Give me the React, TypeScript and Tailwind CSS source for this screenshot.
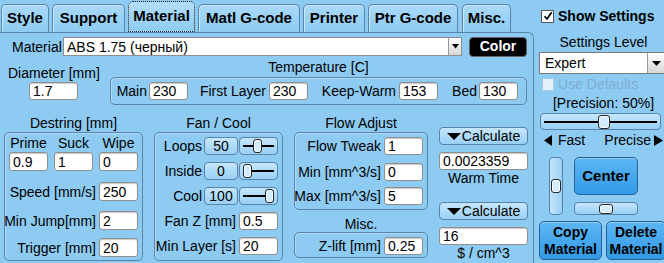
import React from "react";

function Inp({ v, c }: { v: string; c: string }) {
  return (
    <div
      className={`bg-white border border-[#8f8f8f] rounded-[3px] shadow-[inset_0_1px_1px_rgba(0,0,0,0.22)] flex items-center pl-[3px] leading-none overflow-hidden whitespace-nowrap shrink-0 ${c}`}
    >
      {v}
    </div>
  );
}

function Lbl({ t, c }: { t: string; c: string }) {
  return (
    <div className={`flex justify-end whitespace-nowrap leading-[16px] shrink-0 ${c}`}>
      <span>{t}</span>
    </div>
  );
}

function Thumb({ c }: { c: string }) {
  return (
    <div
      className={`rounded-[3px] border border-[#262626] bg-[#d3ecfc] shadow-[inset_0_0_0_1px_#f6fcff] shrink-0 ${c}`}
    />
  );
}

function LineSlider({ pos, c, tc }: { pos: string; c: string; tc: string }) {
  return (
    <div
      className={`rounded-[4px] border border-[#5a83a8] bg-[linear-gradient(#c6e6fb,#98d0f5)] flex items-center px-[3px] shrink-0 ${c}`}
    >
      <div className={`h-[2px] bg-black shrink-0 ${pos}`} />
      <Thumb c={tc} />
      <div className="h-[2px] bg-black flex-1" />
    </div>
  );
}

function LightBtn({ t, c }: { t: string; c: string }) {
  return (
    <div
      className={`rounded-[4px] border border-[#5a83a8] bg-[linear-gradient(#c6e6fb,#98d0f5)] flex items-center justify-center leading-none shrink-0 ${c}`}
    >
      {t}
    </div>
  );
}

function CalcBtn({ c }: { c: string }) {
  return (
    <div
      className={`h-[18px] w-[89px] rounded-[4px] border border-[#5a83a8] bg-[linear-gradient(#c6e6fb,#98d0f5)] flex items-center justify-center gap-[1px] leading-none ${c}`}
    >
      <svg width="14" height="7" viewBox="0 0 14 7">
        <path d="M0 0H14L7 7Z" fill="#000" />
      </svg>
      <span>Calculate</span>
    </div>
  );
}

function Tab({ t, c, active }: { t: string; c: string; active?: boolean }) {
  return (
    <div
      className={
        active
          ? `h-[31px] rounded-t-[5px] border border-dotted border-[#222] bg-[linear-gradient(#b4def9,#8ecbf3)] flex items-center justify-center font-bold text-[15px] whitespace-nowrap shrink-0 ${c}`
          : `h-[28px] rounded-t-[5px] border border-b-0 border-[#5a83a8] bg-[linear-gradient(#a9d9f8,#8ecbf3)] shadow-[inset_1px_1px_0_#c9e9fc] flex items-center justify-center font-bold text-[15px] whitespace-nowrap shrink-0 ${c}`
      }
    >
      {t}
    </div>
  );
}

const groupBox =
  "rounded-[5px] border border-[#5a83a8] shadow-[inset_1px_1px_0_rgba(255,255,255,0.3)]";

export default function App() {
  return (
    <div className="w-[664px] h-[263px] overflow-hidden bg-[#8ecbf3] flex font-['Liberation_Sans',Arial,sans-serif] text-[14px] text-black">
      {/* LEFT */}
      <div className="w-[534px] shrink-0 flex flex-col">
        <div className="h-[32px] flex items-end pl-[1px] gap-[3px] shrink-0">
          <Tab t="Style" c="w-[48px]" />
          <Tab t="Support" c="w-[73px]" />
          <Tab t="Material" c="w-[67px]" active />
          <Tab t="Matl G-code" c="w-[102px]" />
          <Tab t="Printer" c="w-[62px]" />
          <Tab t="Ptr G-code" c="w-[90px]" />
          <Tab t="Misc." c="w-[49px] ml-[1px]" />
        </div>

        <div className="flex-1 border-t border-r border-[#5a83a8] rounded-tr-[6px] flex flex-col">
          {/* Material row */}
          <div className="mt-[4px] flex items-center h-[19px]">
            <div className="w-[63px] pl-[12px] leading-[16px] shrink-0">Material</div>
            <div className="w-[399px] h-[19px] bg-white border border-[#8f8f8f] flex items-center shrink-0">
              <span className="flex-1 pl-[3px] leading-none whitespace-nowrap">ABS 1.75 (черный)</span>
              <div className="w-[13px] h-full border-l border-[#9a9a9a] bg-[linear-gradient(#ffffff,#d6d6d6)] flex items-center justify-center">
                <svg width="7" height="5" viewBox="0 0 7 5">
                  <path d="M0 0H7L3.5 4.5Z" fill="#000" />
                </svg>
              </div>
            </div>
            <div className="ml-[7px] w-[58px] h-[20px] rounded-[4px] bg-black border border-[#666] text-white font-bold text-[14px] flex items-center justify-center shrink-0">
              Color
            </div>
          </div>

          {/* Diameter + temperature */}
          <div className="mt-[3px] flex">
            <div className="w-[110px] pl-[8px] pt-[6px] flex flex-col shrink-0">
              <div className="leading-[16px] whitespace-nowrap">Diameter [mm]</div>
              <Inp v="1.7" c="ml-[21px] mt-[1px] w-[49px] h-[18px]" />
            </div>
            <div className="w-[417px] flex flex-col shrink-0">
              <div className="leading-[16px] text-center">Temperature [C]</div>
              <div className={`mt-[2px] h-[28px] flex items-center ${groupBox}`}>
                <div className="w-[77px] flex items-center shrink-0">
                  <Lbl t="Main" c="flex-1 pr-[2px]" />
                  <Inp v="230" c="w-[39px] h-[18px]" />
                </div>
                <div className="w-[120px] flex items-center shrink-0">
                  <Lbl t="First Layer" c="flex-1 pr-[3px]" />
                  <Inp v="230" c="w-[39px] h-[18px]" />
                </div>
                <div className="w-[130px] flex items-center shrink-0">
                  <Lbl t="Keep-Warm" c="flex-1 pr-[3px]" />
                  <Inp v="153" c="w-[39px] h-[18px]" />
                </div>
                <div className="w-[80px] flex items-center shrink-0">
                  <Lbl t="Bed" c="flex-1 pr-[2px]" />
                  <Inp v="130" c="w-[39px] h-[18px]" />
                </div>
              </div>
            </div>
          </div>

          {/* Groups */}
          <div className="mt-[10px] flex items-start">
            {/* Destring */}
            <div className="ml-[4px] w-[139px] flex flex-col shrink-0">
              <div className="leading-[16px] text-center whitespace-nowrap">Destring [mm]</div>
              <div className={`mt-[1px] h-[129px] flex flex-col ${groupBox}`}>
                <div className="pt-[2px] pl-[4px] flex gap-[6px]">
                  <div className="w-[39px] text-center leading-[16px]">Prime</div>
                  <div className="w-[39px] text-center leading-[16px]">Suck</div>
                  <div className="w-[39px] text-center leading-[16px]">Wipe</div>
                </div>
                <div className="mt-[1px] pl-[4px] flex gap-[6px]">
                  <Inp v="0.9" c="w-[39px] h-[19px]" />
                  <Inp v="1" c="w-[39px] h-[19px]" />
                  <Inp v="0" c="w-[39px] h-[19px]" />
                </div>
                <div className="mt-[11px] flex items-center">
                  <Lbl t="Speed [mm/s]" c="w-[94px] pr-[3px]" />
                  <Inp v="250" c="w-[39px] h-[19px]" />
                </div>
                <div className="mt-[10px] flex items-center">
                  <Lbl t="Min Jump[mm]" c="w-[94px] pr-[3px]" />
                  <Inp v="2" c="w-[39px] h-[19px]" />
                </div>
                <div className="mt-[8px] flex items-center">
                  <Lbl t="Trigger [mm]" c="w-[94px] pr-[3px]" />
                  <Inp v="20" c="w-[39px] h-[19px]" />
                </div>
              </div>
            </div>

            {/* Fan / Cool */}
            <div className="ml-[11px] w-[129px] flex flex-col shrink-0">
              <div className="leading-[16px] text-center whitespace-nowrap">Fan / Cool</div>
              <div className={`mt-[1px] h-[129px] flex flex-col ${groupBox}`}>
                <div className="mt-[4px] flex items-center">
                  <Lbl t="Loops" c="w-[49px] pr-[2px]" />
                  <LightBtn t="50" c="w-[34px] h-[18px]" />
                  <LineSlider pos="w-[10px]" c="ml-[1px] w-[39px] h-[18px]" tc="w-[9px] h-[14px]" />
                </div>
                <div className="mt-[7px] flex items-center">
                  <Lbl t="Inside" c="w-[49px] pr-[2px]" />
                  <LightBtn t="0" c="w-[34px] h-[18px]" />
                  <LineSlider pos="w-[0px]" c="ml-[1px] w-[39px] h-[18px]" tc="w-[9px] h-[14px]" />
                </div>
                <div className="mt-[7px] flex items-center">
                  <Lbl t="Cool" c="w-[49px] pr-[2px]" />
                  <LightBtn t="100" c="w-[34px] h-[18px]" />
                  <LineSlider pos="w-[22px]" c="ml-[1px] w-[39px] h-[18px]" tc="w-[9px] h-[14px]" />
                </div>
                <div className="mt-[7px] flex items-center">
                  <Lbl t="Fan Z [mm]" c="w-[84px] pr-[3px]" />
                  <Inp v="0.5" c="w-[39px] h-[18px]" />
                </div>
                <div className="mt-[7px] flex items-center">
                  <Lbl t="Min Layer [s]" c="w-[84px] pr-[3px]" />
                  <Inp v="20" c="w-[39px] h-[18px]" />
                </div>
              </div>
            </div>

            {/* Flow Adjust + Misc */}
            <div className="ml-[11px] w-[134px] flex flex-col shrink-0">
              <div className="leading-[16px] text-center whitespace-nowrap">Flow Adjust</div>
              <div className={`mt-[1px] h-[78px] flex flex-col ${groupBox}`}>
                <div className="mt-[4px] flex items-center">
                  <Lbl t="Flow Tweak" c="w-[89px] pr-[3px]" />
                  <Inp v="1" c="w-[39px] h-[18px]" />
                </div>
                <div className="mt-[8px] flex items-center">
                  <Lbl t="Min [mm^3/s]" c="w-[89px] pr-[3px]" />
                  <Inp v="0" c="w-[39px] h-[18px]" />
                </div>
                <div className="mt-[6px] flex items-center">
                  <Lbl t="Max [mm^3/s]" c="w-[89px] pr-[3px]" />
                  <Inp v="5" c="w-[39px] h-[18px]" />
                </div>
              </div>
              <div className="mt-[7px] leading-[15px] text-center">Misc.</div>
              <div className={`h-[26px] flex flex-col ${groupBox}`}>
                <div className="mt-[4px] flex items-center">
                  <Lbl t="Z-lift [mm]" c="w-[89px] pr-[3px]" />
                  <Inp v="0.25" c="w-[39px] h-[18px]" />
                </div>
              </div>
            </div>

            {/* Calculate column */}
            <div className="ml-[11px] w-[89px] flex flex-col shrink-0">
              <CalcBtn c="mt-[12px]" />
              <Inp v="0.0023359" c="mt-[7px] w-[89px] h-[18px]" />
              <div className="leading-[16px] text-center whitespace-nowrap">Warm Time</div>
              <CalcBtn c="mt-[16px]" />
              <Inp v="16" c="mt-[7px] w-[89px] h-[18px]" />
              <div className="leading-[16px] text-center whitespace-nowrap">$ / cm^3</div>
            </div>
          </div>
        </div>
      </div>

      {/* RIGHT */}
      <div className="w-[130px] shrink-0 flex flex-col">
        <div className="mt-[8px] h-[16px] flex items-center pl-[7px]">
          <div className="w-[13px] h-[13px] bg-white border border-[#555] flex items-center justify-center shrink-0">
            <svg width="10" height="10" viewBox="0 0 10 10">
              <path d="M1.5 5.2L4 8L8.7 1.2" fill="none" stroke="#000" strokeWidth="1.7" />
            </svg>
          </div>
          <span className="ml-[4px] font-bold leading-[16px] whitespace-nowrap">Show Settings</span>
        </div>
        <div className="mt-[10px] pl-[9px] text-center leading-[16px] whitespace-nowrap">Settings Level</div>
        <div className="mt-[2px] ml-[5px] w-[127px] h-[22px] shrink-0 bg-white border border-[#7a7a7a] flex items-center">
          <span className="pl-[5px] flex-1 leading-none whitespace-nowrap">Expert</span>
          <div className="w-[18px] h-full border-l border-[#9a9a9a] bg-[linear-gradient(#ffffff,#d6d6d6)] flex items-center justify-center">
            <svg width="9" height="5" viewBox="0 0 9 5">
              <path d="M0 0H9L4.5 5Z" fill="#000" />
            </svg>
          </div>
        </div>
        <div className="mt-[3px] h-[14px] flex items-center pl-[8px]">
          <div className="w-[12px] h-[13px] border border-[#a9cbe3] bg-[#e4f2fc] shrink-0" />
          <span className="ml-[4px] text-[#7fadd2] leading-[16px] whitespace-nowrap">Use Defaults</span>
        </div>
        <div className="mt-[4px] pl-[9px] text-center leading-[16px] whitespace-nowrap">[Precision: 50%]</div>
        <LineSlider pos="w-[54px]" c="mt-[2px] ml-[6px] w-[121px] h-[17px]" tc="w-[12px] h-[14px]" />
        <div className="mt-[2px] h-[16px] flex items-center justify-between pl-[10px] pr-[1px]">
          <div className="flex items-center">
            <svg width="8" height="11" viewBox="0 0 8 11">
              <path d="M8 0V11L0 5.5Z" fill="#000" />
            </svg>
            <span className="ml-[6px] leading-[16px]">Fast</span>
          </div>
          <div className="flex items-center">
            <span className="leading-[16px]">Precise</span>
            <svg className="ml-[3px]" width="9" height="11" viewBox="0 0 9 11">
              <path d="M0 0V11L9 5.5Z" fill="#000" />
            </svg>
          </div>
        </div>
        <div className="mt-[9px] flex">
          <div className="ml-[15px] w-[14px] h-[58px] rounded-[4px] border border-[#5a83a8] bg-[linear-gradient(90deg,#c6e6fb,#98d0f5)] flex flex-col items-center pt-[21px] shrink-0">
            <Thumb c="w-[10px] h-[14px]" />
          </div>
          <div className="ml-[11px] w-[64px] flex flex-col shrink-0">
            <div className="h-[38px] rounded-[5px] border border-[#24609a] bg-[linear-gradient(#5cb6f3,#3399e6)] shadow-[inset_0_1px_0_rgba(255,255,255,0.35)] flex items-center justify-center font-bold text-[15px]">
              Center
            </div>
            <div className="mt-[7px] h-[13px] rounded-[4px] border border-[#5a83a8] bg-[linear-gradient(#c6e6fb,#98d0f5)] flex items-center pl-[24px]">
              <Thumb c="w-[14px] h-[10px]" />
            </div>
          </div>
        </div>
        <div className="mt-[6px] flex pl-[5px] gap-[4px]">
          <div className="w-[63px] h-[39px] shrink-0 rounded-[5px] border border-[#24609a] bg-[linear-gradient(#5cb6f3,#3399e6)] shadow-[inset_0_1px_0_rgba(255,255,255,0.35)] flex flex-col items-center justify-center font-bold leading-[17px]">
            <span>Copy</span>
            <span>Material</span>
          </div>
          <div className="w-[60px] h-[39px] shrink-0 rounded-[5px] border border-[#24609a] bg-[linear-gradient(#5cb6f3,#3399e6)] shadow-[inset_0_1px_0_rgba(255,255,255,0.35)] flex flex-col items-center justify-center font-bold leading-[17px]">
            <span>Delete</span>
            <span>Material</span>
          </div>
        </div>
      </div>
    </div>
  );
}
